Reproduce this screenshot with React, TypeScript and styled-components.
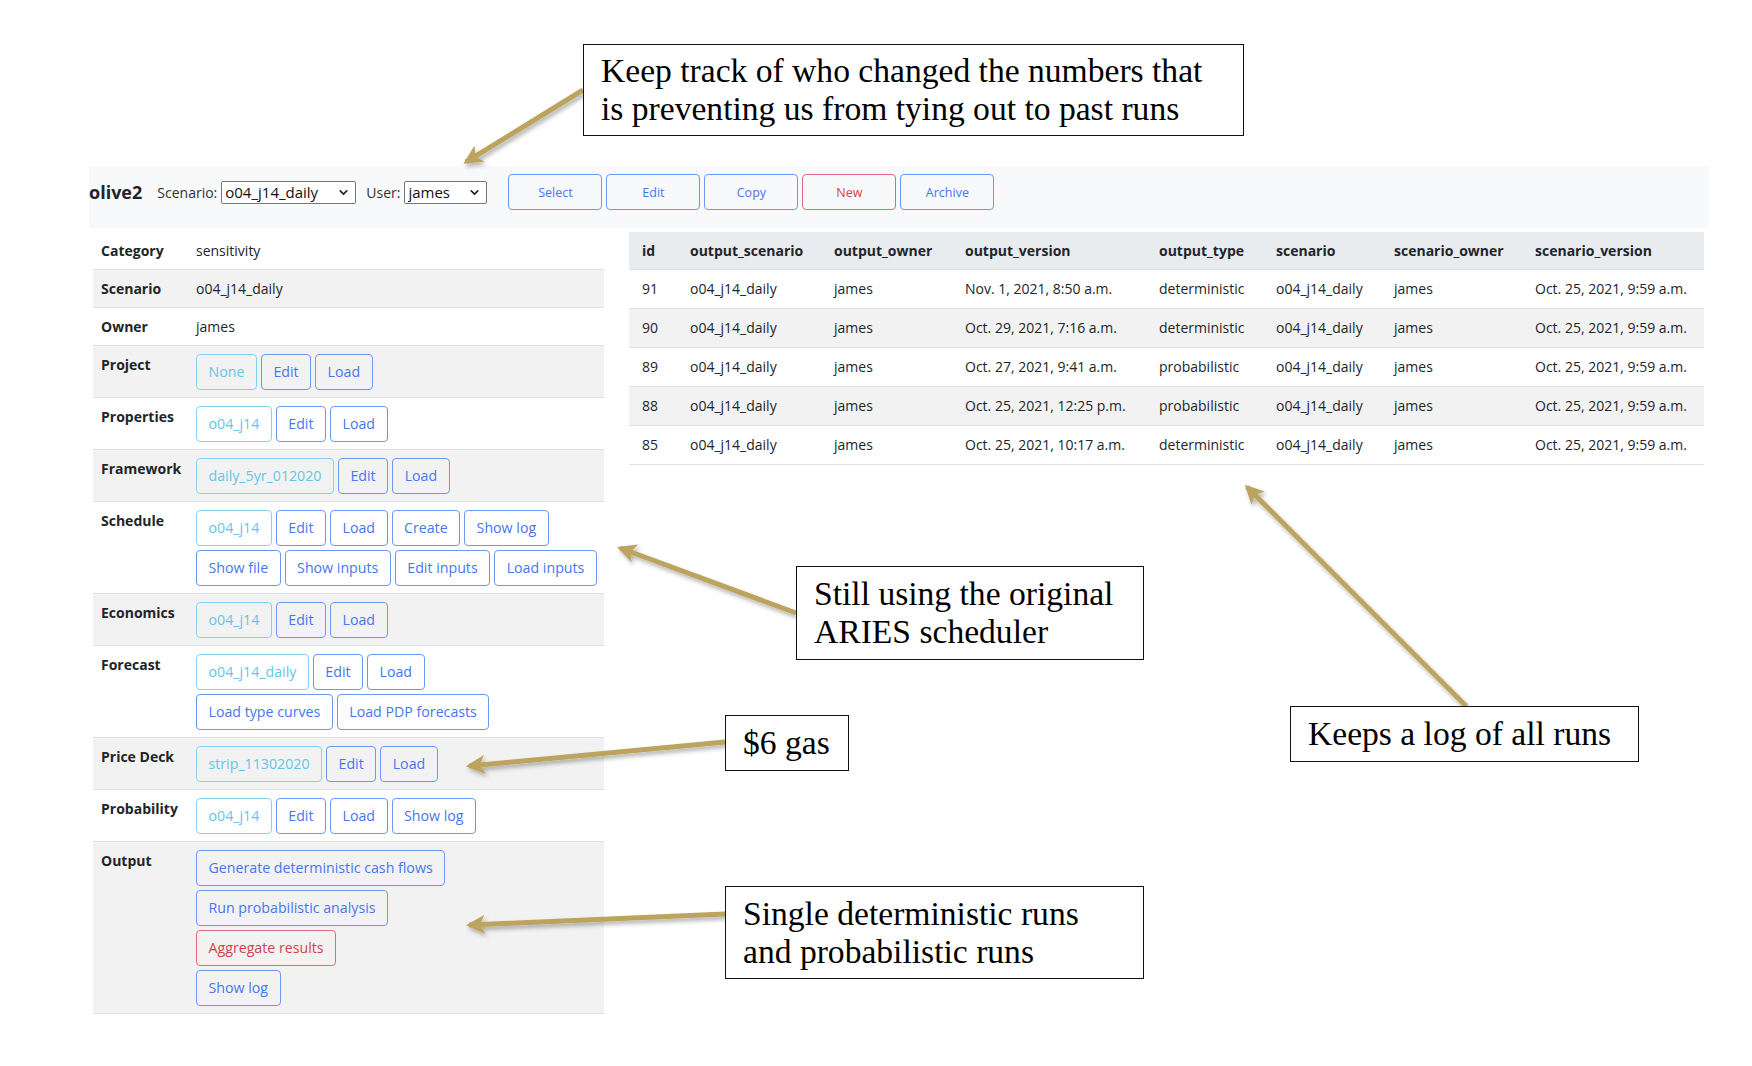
import React from 'react';
import styled, { createGlobalStyle } from 'styled-components';
import { ChevronDown } from 'lucide-react';

type Tone = 'primary' | 'info' | 'danger';

const tones: Record<Tone, { text: string; border: string }> = {
  primary: { text: '#4676f2', border: '#6c97f2' },
  info: { text: '#62c6e9', border: '#7fd4ee' },
  danger: { text: '#d0424e', border: '#dd6c76' },
};

const GlobalStyle = createGlobalStyle`
  * { box-sizing: border-box; }
  body {
    margin: 0;
    background: #fff;
    color: #212529;
    font-family: "Open Sans", "Noto Sans", sans-serif;
  }
`;

const Page = styled.div`
  position: relative;
  width: 1752px;
  min-height: 1066px;
  padding: 166px 43px 40px 89px;
`;

const TopBar = styled.nav`
  display: flex;
  align-items: center;
  height: 62px;
  padding: 8px 0 18px;
  background: #f8f9fa;
`;

const Brand = styled.span`
  font-size: 18px;
  font-weight: 700;
  margin-right: 15px;
  color: #212529;
`;

const Field = styled.label<{ $gap: number }>`
  display: inline-flex;
  align-items: center;
  gap: 4px;
  margin-right: ${(p) => p.$gap}px;
  font-size: 14px;
  color: #333;
`;

const SelectWrap = styled.span<{ $w: number }>`
  position: relative;
  display: inline-flex;
  width: ${(p) => p.$w}px;
  height: 23px;
`;

const Select = styled.select`
  appearance: none;
  width: 100%;
  height: 100%;
  padding: 0 22px 0 3px;
  border: 1px solid #767676;
  border-radius: 2px;
  background: #fff;
  color: #111;
  font-family: "Open Sans", sans-serif;
  font-size: 15px;
`;

const Chevron = styled(ChevronDown)`
  position: absolute;
  right: 6px;
  top: 5px;
  pointer-events: none;
`;

const ToolGroup = styled.div`
  display: flex;
  gap: 4px;
`;

const ToolButton = styled.button<{ $tone: Tone }>`
  width: 94px;
  height: 36px;
  padding: 0;
  border: 1px solid ${(p) => tones[p.$tone].border};
  border-radius: 4px;
  background: transparent;
  color: ${(p) => tones[p.$tone].text};
  font-family: "Open Sans", sans-serif;
  font-size: 12.5px;
`;

const Main = styled.div`
  display: flex;
  align-items: flex-start;
  gap: 25px;
  padding: 4px 5px 0 4px;
`;

const InfoTable = styled.table`
  width: 511px;
  flex: none;
  table-layout: fixed;
  border-collapse: collapse;
  font-size: 14px;
  line-height: 22px;

  tr:nth-child(even) {
    background: #f2f2f2;
  }

  th,
  td {
    padding: 8px 8px 7px;
    border-bottom: 1px solid #dee2e6;
    vertical-align: top;
    text-align: left;
  }

  th {
    width: 95px;
    font-weight: 700;
    white-space: nowrap;
  }
`;

const ButtonStack = styled.div`
  display: flex;
  flex-direction: column;
  align-items: flex-start;
  gap: 4px;
`;

const ButtonRow = styled.div`
  display: flex;
  gap: 4px;
`;

const Btn = styled.button<{ $tone: Tone }>`
  height: 36px;
  padding: 6px 11.5px;
  border: 1px solid ${(p) => tones[p.$tone].border};
  border-radius: 4px;
  background: transparent;
  color: ${(p) => tones[p.$tone].text};
  font-family: "Open Sans", sans-serif;
  font-size: 14.2px;
  line-height: 22px;
  white-space: nowrap;
`;

const RunsTable = styled.table`
  width: 1075px;
  flex: none;
  table-layout: fixed;
  border-collapse: collapse;
  font-size: 14px;
  line-height: 22px;

  th,
  td {
    padding: 8px 12px 8px 13px;
    border-bottom: 1px solid #dee2e6;
    text-align: left;
    white-space: nowrap;
  }

  thead th {
    padding-bottom: 7px;
    background: #e9ecef;
    font-weight: 700;
  }

  tbody tr:nth-child(even) {
    background: #f2f2f2;
  }
`;

const Col = styled.col<{ $w: number }>`
  width: ${(p) => p.$w}px;
`;

const Overlay = styled.div`
  position: absolute;
  inset: 0;
  pointer-events: none;
`;

const ArrowLayer = styled.svg`
  position: absolute;
  left: 0;
  top: 0;
`;

const Callout = styled.div<{ $x: number; $y: number; $w: number; $h: number }>`
  position: absolute;
  left: ${(p) => p.$x}px;
  top: ${(p) => p.$y}px;
  width: ${(p) => p.$w}px;
  height: ${(p) => p.$h}px;
  display: flex;
  flex-direction: column;
  justify-content: center;
  padding: 0 17px;
  border: 1px solid #111;
  background: #fff;
  color: #000;
  font-family: "Liberation Serif", "Times New Roman", serif;
  font-size: 33.6px;
  line-height: 38px;
  white-space: nowrap;
`;

type B = [string, Tone];

const infoRows: { label: string; text?: string; buttons?: B[][] }[] = [
  { label: 'Category', text: 'sensitivity' },
  { label: 'Scenario', text: 'o04_j14_daily' },
  { label: 'Owner', text: 'james' },
  { label: 'Project', buttons: [[['None', 'info'], ['Edit', 'primary'], ['Load', 'primary']]] },
  { label: 'Properties', buttons: [[['o04_j14', 'info'], ['Edit', 'primary'], ['Load', 'primary']]] },
  { label: 'Framework', buttons: [[['daily_5yr_012020', 'info'], ['Edit', 'primary'], ['Load', 'primary']]] },
  {
    label: 'Schedule',
    buttons: [
      [['o04_j14', 'info'], ['Edit', 'primary'], ['Load', 'primary'], ['Create', 'primary'], ['Show log', 'primary']],
      [['Show file', 'primary'], ['Show inputs', 'primary'], ['Edit inputs', 'primary'], ['Load inputs', 'primary']],
    ],
  },
  { label: 'Economics', buttons: [[['o04_j14', 'info'], ['Edit', 'primary'], ['Load', 'primary']]] },
  {
    label: 'Forecast',
    buttons: [
      [['o04_j14_daily', 'info'], ['Edit', 'primary'], ['Load', 'primary']],
      [['Load type curves', 'primary'], ['Load PDP forecasts', 'primary']],
    ],
  },
  { label: 'Price Deck', buttons: [[['strip_11302020', 'info'], ['Edit', 'primary'], ['Load', 'primary']]] },
  {
    label: 'Probability',
    buttons: [[['o04_j14', 'info'], ['Edit', 'primary'], ['Load', 'primary'], ['Show log', 'primary']]],
  },
  {
    label: 'Output',
    buttons: [
      [['Generate deterministic cash flows', 'primary']],
      [['Run probabilistic analysis', 'primary']],
      [['Aggregate results', 'danger']],
      [['Show log', 'primary']],
    ],
  },
];

const columns = [
  ['id', 48],
  ['output_scenario', 144],
  ['output_owner', 131],
  ['output_version', 194],
  ['output_type', 117],
  ['scenario', 118],
  ['scenario_owner', 141],
  ['scenario_version', 182],
] as const;

const runs = [
  ['91', 'Nov. 1, 2021, 8:50 a.m.', 'deterministic'],
  ['90', 'Oct. 29, 2021, 7:16 a.m.', 'deterministic'],
  ['89', 'Oct. 27, 2021, 9:41 a.m.', 'probabilistic'],
  ['88', 'Oct. 25, 2021, 12:25 p.m.', 'probabilistic'],
  ['85', 'Oct. 25, 2021, 10:17 a.m.', 'deterministic'],
];

const arrows = [
  [583, 90, 466, 162],
  [796, 613, 620, 548],
  [725, 742, 469, 766],
  [725, 914, 469, 925],
  [1466, 706, 1247, 487],
];

const callouts = [
  { x: 583, y: 44, w: 661, h: 92, lines: ['Keep track of who changed the numbers that', 'is preventing us from tying out to past runs'] },
  { x: 796, y: 566, w: 348, h: 94, lines: ['Still using the original', 'ARIES scheduler'] },
  { x: 725, y: 715, w: 124, h: 56, lines: ['$6 gas'] },
  { x: 725, y: 886, w: 419, h: 93, lines: ['Single deterministic runs', 'and probabilistic runs'] },
  { x: 1290, y: 706, w: 349, h: 56, lines: ['Keeps a log of all runs'] },
];

const App = () => {
  return (
    <Page>
      <GlobalStyle />
      <TopBar>
        <Brand>olive2</Brand>
        <Field $gap={10}>
          Scenario:
          <SelectWrap $w={135}>
            <Select defaultValue="o04_j14_daily">
              <option>o04_j14_daily</option>
            </Select>
            <Chevron size={13} strokeWidth={3} color="#222" />
          </SelectWrap>
        </Field>
        <Field $gap={21}>
          User:
          <SelectWrap $w={83}>
            <Select defaultValue="james">
              <option>james</option>
            </Select>
            <Chevron size={13} strokeWidth={3} color="#222" />
          </SelectWrap>
        </Field>
        <ToolGroup>
          <ToolButton $tone="primary">Select</ToolButton>
          <ToolButton $tone="primary">Edit</ToolButton>
          <ToolButton $tone="primary">Copy</ToolButton>
          <ToolButton $tone="danger">New</ToolButton>
          <ToolButton $tone="primary">Archive</ToolButton>
        </ToolGroup>
      </TopBar>

      <Main>
        <InfoTable>
          <tbody>
            {infoRows.map((row) => (
              <tr key={row.label}>
                <th>{row.label}</th>
                <td>
                  {row.text}
                  {row.buttons && (
                    <ButtonStack>
                      {row.buttons.map((group, i) => (
                        <ButtonRow key={i}>
                          {group.map(([name, tone], j) => (
                            <Btn key={j} $tone={tone}>
                              {name}
                            </Btn>
                          ))}
                        </ButtonRow>
                      ))}
                    </ButtonStack>
                  )}
                </td>
              </tr>
            ))}
          </tbody>
        </InfoTable>

        <RunsTable>
          <colgroup>
            {columns.map(([name, w]) => (
              <Col key={name} $w={w} />
            ))}
          </colgroup>
          <thead>
            <tr>
              {columns.map(([name]) => (
                <th key={name}>{name}</th>
              ))}
            </tr>
          </thead>
          <tbody>
            {runs.map(([id, version, type]) => (
              <tr key={id}>
                <td>{id}</td>
                <td>o04_j14_daily</td>
                <td>james</td>
                <td>{version}</td>
                <td>{type}</td>
                <td>o04_j14_daily</td>
                <td>james</td>
                <td>Oct. 25, 2021, 9:59 a.m.</td>
              </tr>
            ))}
          </tbody>
        </RunsTable>
      </Main>

      <Overlay>
        <ArrowLayer width="1752" height="1066" viewBox="0 0 1752 1066">
          <defs>
            <filter id="arrowShadow" x="-20%" y="-20%" width="140%" height="140%">
              <feDropShadow dx="2" dy="3" stdDeviation="2" floodColor="#000" floodOpacity="0.3" />
            </filter>
            <marker
              id="head"
              viewBox="0 0 12 12"
              refX="10"
              refY="6"
              markerWidth="19"
              markerHeight="19"
              markerUnits="userSpaceOnUse"
              orient="auto"
            >
              <path d="M0,0 L12,6 L0,12 L3,6 Z" fill="#bca45f" />
            </marker>
          </defs>
          <g filter="url(#arrowShadow)">
            {arrows.map(([x1, y1, x2, y2], i) => (
              <line
                key={i}
                x1={x1}
                y1={y1}
                x2={x2}
                y2={y2}
                stroke="#bca45f"
                strokeWidth="5"
                markerEnd="url(#head)"
              />
            ))}
          </g>
        </ArrowLayer>
        {callouts.map((c) => (
          <Callout key={c.lines[0]} $x={c.x} $y={c.y} $w={c.w} $h={c.h}>
            {c.lines.map((l) => (
              <span key={l}>{l}</span>
            ))}
          </Callout>
        ))}
      </Overlay>
    </Page>
  );
};

export default App;
